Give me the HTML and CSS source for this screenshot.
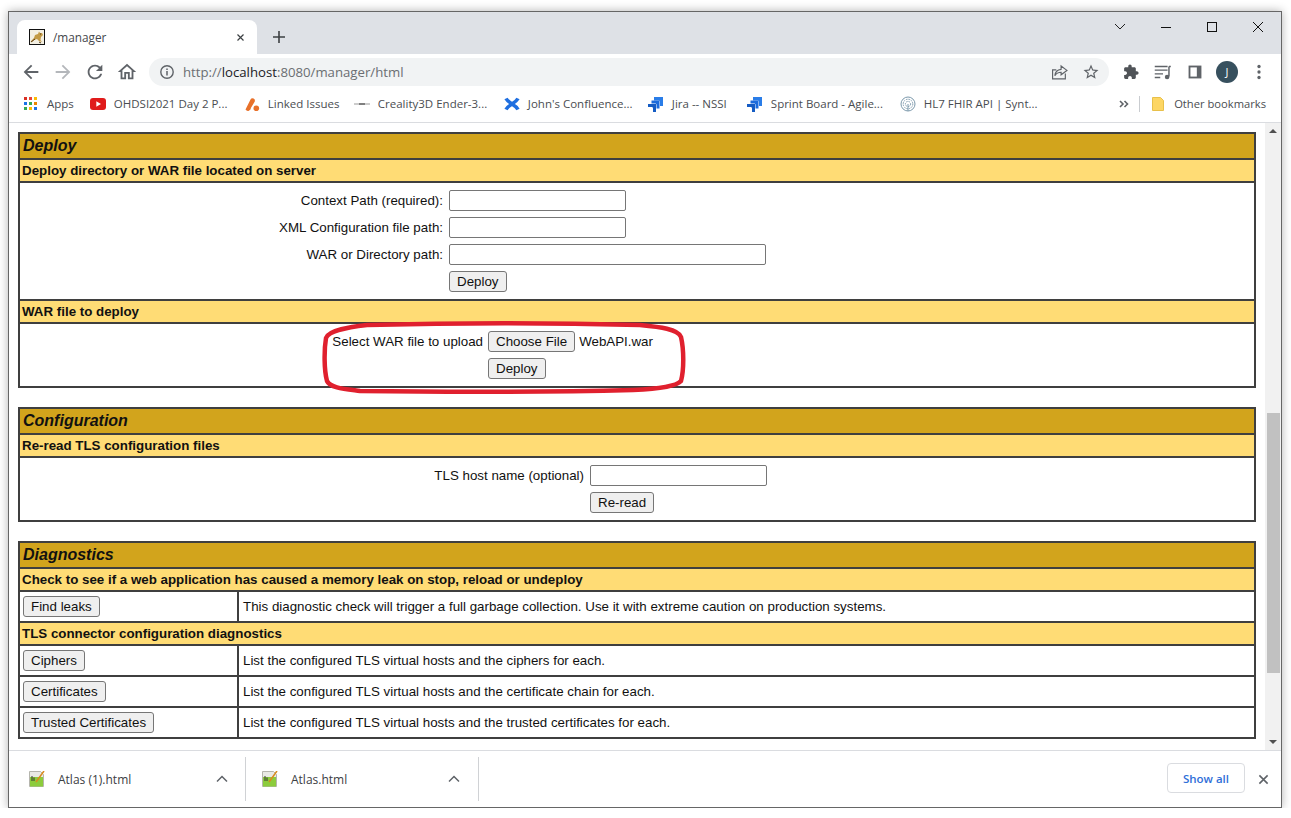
FILE: index.html
```html
<!DOCTYPE html>
<html lang="en">
<head>
    <meta charset="UTF-8">
    <title>/manager</title>
    <link rel="stylesheet" href="styles.css">
</head>
<body>
<div class="window">
    <div class="tabstrip">
        <div class="tab">
            <svg class="favicon" viewBox="0 0 16 16"><rect x=".5" y=".5" width="15" height="15" fill="#f3efe2" stroke="#111"/><path d="M1.500 12.500L5 9l1-3 3-1 1-2.500 1 1.500h2l1 2-2 2-.5 3 1.500 2-3-1-2-2-3 1-2 2z" fill="#c39a45"/><path d="M2 13l4-3M10 13l2 1M11 5h1" stroke="#5c4018"/></svg>
            <span class="tab-title">/manager</span>
            <svg class="tab-close" viewBox="0 0 12 12"><path d="M2 2l8 8M10 2l-8 8" stroke="#3c4043" stroke-width="1.6"/></svg>
        </div>
        <svg class="new-tab" viewBox="0 0 12 12"><path d="M6 0v12M0 6h12" stroke="#3c4043" stroke-width="1.6"/></svg>
        <div class="caption">
            <svg class="caption-btn" viewBox="0 0 46 30"><path d="M18 12l5 5 5-5" fill="none" stroke="#222"/></svg>
            <svg class="caption-btn" viewBox="0 0 46 30"><path d="M18 15.5h10" stroke="#111"/></svg>
            <svg class="caption-btn" viewBox="0 0 46 30"><rect x="18.5" y="10.5" width="9" height="9" fill="none" stroke="#111"/></svg>
            <svg class="caption-btn" viewBox="0 0 46 30"><path d="M18 10l10 10M28 10l-10 10" stroke="#111"/></svg>
        </div>
    </div>

    <div class="toolbar">
        <svg class="tool" viewBox="0 0 24 24"><path fill="#5f6368" d="M20 11H7.83l5.59-5.59L12 4l-8 8 8 8 1.41-1.41L7.83 13H20v-2z"/></svg>
        <svg class="tool" viewBox="0 0 24 24"><path fill="#b4b7bb" d="M4 11h12.17l-5.59-5.59L12 4l8 8-8 8-1.41-1.41L16.17 13H4v-2z"/></svg>
        <svg class="tool" viewBox="0 0 24 24"><path fill="#5f6368" d="M17.65 6.35C16.2 4.9 14.21 4 12 4c-4.42 0-7.99 3.58-7.99 8s3.57 8 7.99 8c3.73 0 6.84-2.55 7.73-6h-2.08c-.82 2.33-3.04 4-5.65 4-3.31 0-6-2.69-6-6s2.69-6 6-6c1.66 0 3.14.69 4.22 1.78L13 11h7V4l-2.35 2.35z"/></svg>
        <svg class="tool" viewBox="0 0 24 24"><path fill="#5f6368" d="M12 3L2 12h3v8h6v-6h2v6h6v-8h3L12 3zm5 15h-2v-6H9v6H7v-7.81l5-4.5 5 4.5V18z"/></svg>
        <div class="omnibox">
            <svg class="omni-info" viewBox="0 0 16 16"><circle cx="8" cy="8" r="6.2" fill="none" stroke="#5f6368" stroke-width="1.4"/><path d="M8 7v4.4M8 4.4v1.5" stroke="#5f6368" stroke-width="1.5"/></svg>
            <span class="url">http://<b>localhost</b>:8080/manager/html</span>
            <svg class="omni-icon" viewBox="0 0 16 16"><path d="M13.5 9v5H1.5V5.5H5" fill="none" stroke="#5f6368" stroke-width="1.1"/><path d="M9.5 1.8L15 6l-5.5 4.2V7.8C7 7.8 5 8.8 3.6 11c.3-3.4 2.4-5.6 5.9-6z" fill="none" stroke="#5f6368" stroke-width="1.1"/></svg>
            <svg class="omni-icon star" viewBox="0 0 24 24"><path fill="#5f6368" d="M22 9.24l-7.19-.62L12 2 9.19 8.63 2 9.24l5.46 4.73L5.82 21 12 17.27 18.18 21l-1.63-7.03L22 9.24zM12 15.4l-3.76 2.27 1-4.28-3.32-2.88 4.38-.38L12 6.1l1.71 4.04 4.38.38-3.32 2.88 1 4.28L12 15.4z"/></svg>
        </div>
        <div class="tool-right">
            <svg class="tool" viewBox="-4 -4 32 32"><path fill="#505458" d="M20.5 11H19V7c0-1.1-.9-2-2-2h-4V3.5C13 2.12 11.88 1 10.5 1S8 2.12 8 3.5V5H4c-1.1 0-1.99.9-1.99 2v3.8H3.5c1.49 0 2.7 1.21 2.7 2.7s-1.21 2.7-2.7 2.7H2V20c0 1.1.9 2 2 2h3.8v-1.5c0-1.49 1.21-2.7 2.7-2.7 1.49 0 2.7 1.21 2.7 2.7V22H17c1.1 0 2-.9 2-2v-4h1.5c1.38 0 2.5-1.12 2.5-2.5S21.88 11 20.5 11z"/></svg>
            <svg class="tool" viewBox="0 0 24 24"><path d="M3 6h14M3 10h14M3 14h9M3 18h6" stroke="#5f6368" stroke-width="1.4" fill="none"/><path d="M18.5 6h2M18.5 6v11" stroke="#5f6368" stroke-width="1.6"/><circle cx="16.5" cy="17.5" r="2.5" fill="#5f6368"/></svg>
            <svg class="tool" viewBox="0 0 24 24"><rect x="5" y="5" width="14" height="14" fill="#5f6368"/><rect x="7" y="7" width="7" height="10" fill="#fff"/></svg>
            <div class="avatar">J</div>
            <svg class="tool" viewBox="0 0 24 24"><circle cx="12" cy="6" r="1.8" fill="#5f6368"/><circle cx="12" cy="12" r="1.8" fill="#5f6368"/><circle cx="12" cy="18" r="1.8" fill="#5f6368"/></svg>
        </div>
    </div>

    <div class="bookmarks">
        <a class="bm bm-apps">
            <svg class="bm-icon" viewBox="0 0 14 14"><path d="M0 0h3v3H0z" fill="#d93025"/><path d="M5 0h3v3H5z" fill="#ea4335"/><path d="M10 0h3v3h-3z" fill="#fbbc04"/><path d="M0 5h3v3H0z" fill="#1a73e8"/><path d="M5 5h3v3H5z" fill="#34a853"/><path d="M10 5h3v3h-3z" fill="#ea8600"/><path d="M0 10h3v3H0z" fill="#34a853"/><path d="M5 10h3v3H5z" fill="#fbbc04"/><path d="M10 10h3v3h-3z" fill="#1a73e8"/></svg>
            <span class="bm-text">Apps</span>
        </a>
        <a class="bm bm-ohdsi">
            <svg class="bm-icon" viewBox="0 0 16 16"><rect y="2" width="16" height="12" rx="3" fill="#e01b1b"/><path d="M6.3 5.2L11 8l-4.7 2.8z" fill="#fff"/></svg>
            <span class="bm-text">OHDSI2021 Day 2 P...</span>
        </a>
        <a class="bm bm-linked">
            <svg class="bm-icon" viewBox="0 0 16 16"><path d="M1.500 13.500L6.500 3.500a2.400 2.400 0 0 1 4.300 2.100L7 11.800a3 3 0 0 1-5.500 1.700z" fill="#e8712a"/><circle cx="12.3" cy="12.3" r="2.8" fill="#e8712a"/></svg>
            <span class="bm-text">Linked Issues</span>
        </a>
        <a class="bm bm-creality">
            <svg class="bm-icon" viewBox="0 0 16 16"><path d="M0 8h5M11 8h5" stroke="#999"/><path d="M5 8h6" stroke="#555" stroke-width="1.5"/></svg>
            <span class="bm-text">Creality3D Ender-3...</span>
        </a>
        <a class="bm bm-confluence">
            <svg class="bm-icon" viewBox="0 0 16 16"><path d="M2 2.500C5 8 11 8 14 13.500M14 2.500C11 8 5 8 2 13.500" fill="none" stroke="#1f6fe0" stroke-width="3.600"/></svg>
            <span class="bm-text">John's Confluence...</span>
        </a>
        <a class="bm bm-jira">
            <svg class="bm-icon" viewBox="0 0 16 16"><path d="M6 1h9v9h-3V6c0-1-.5-1.500-1.500-1.500H6z" fill="#2a7de8"/><path d="M3.500 4.500h8v8h-3V9c0-1-.5-1.500-1.500-1.500H3.500z" fill="#1c6bdc"/><path d="M0 8h8v8H5v-3.500C5 11.500 4.500 11 3.500 11H0z" fill="#155cc4"/></svg>
            <span class="bm-text">Jira -- NSSI</span>
        </a>
        <a class="bm bm-sprint">
            <svg class="bm-icon" viewBox="0 0 16 16"><path d="M6 1h9v9h-3V6c0-1-.5-1.500-1.500-1.500H6z" fill="#2a7de8"/><path d="M3.500 4.500h8v8h-3V9c0-1-.5-1.500-1.500-1.500H3.500z" fill="#1c6bdc"/><path d="M0 8h8v8H5v-3.500C5 11.500 4.500 11 3.500 11H0z" fill="#155cc4"/></svg>
            <span class="bm-text">Sprint Board - Agile...</span>
        </a>
        <a class="bm">
            <svg class="bm-icon" viewBox="0 0 16 16" fill="none" stroke="#7b98ab"><circle cx="8" cy="8" r="7"/><circle cx="8" cy="8" r="4.8" stroke-dasharray="1.5 1"/><circle cx="8" cy="8" r="2.6" stroke-dasharray="1.5 1"/><path d="M8 8v7"/></svg>
            <span class="bm-text">HL7 FHIR API | Synt...</span>
        </a>
        <svg class="bm-more" viewBox="0 0 10 10"><path d="M1 2l3 3-3 3M5.500 2l3 3-3 3" fill="none" stroke="#5f6368" stroke-width="1.6"/></svg>
        <span class="bm-sep"></span>
        <a class="bm bm-other">
            <svg class="bm-folder" viewBox="0 0 12 14"><path d="M.5.500h8l3 3v10H.5z" fill="#fdd663" stroke="#e8c04a"/></svg>
            <span class="bm-text">Other bookmarks</span>
        </a>
    </div>

    <div class="viewport">
        <main class="page">
            <table class="box">
                <tr><td class="title" colspan="2">Deploy</td></tr>
                <tr><td class="header-left" colspan="2">Deploy directory or WAR file located on server</td></tr>
                <tr>
                    <td class="form-cell form-server" colspan="2">
                        <div class="form-grid grid-server">
                            <label>Context Path (required):</label><input class="field" type="text">
                            <label>XML Configuration file path:</label><input class="field" type="text">
                            <label>WAR or Directory path:</label><input class="field field-wide" type="text">
                            <span></span><div><button>Deploy</button></div>
                        </div>
                    </td>
                </tr>
                <tr><td class="header-left" colspan="2">WAR file to deploy</td></tr>
                <tr>
                    <td class="form-cell form-short" colspan="2">
                        <div class="form-grid grid-war">
                            <label>Select WAR file to upload</label>
                            <div class="file-line"><button>Choose File</button><span>WebAPI.war</span></div>
                            <span></span><div><button>Deploy</button></div>
                        </div>
                    </td>
                </tr>
            </table>

            <table class="box">
                <tr><td class="title" colspan="2">Configuration</td></tr>
                <tr><td class="header-left" colspan="2">Re-read TLS configuration files</td></tr>
                <tr>
                    <td class="form-cell form-short" colspan="2">
                        <div class="form-grid grid-tls">
                            <label>TLS host name (optional)</label><input class="field" type="text">
                            <span></span><div><button>Re-read</button></div>
                        </div>
                    </td>
                </tr>
            </table>

            <table class="box">
                <tr><td class="title" colspan="2">Diagnostics</td></tr>
                <tr><td class="header-left" colspan="2">Check to see if a web application has caused a memory leak on stop, reload or undeploy</td></tr>
                <tr>
                    <td class="action"><button>Find leaks</button></td>
                    <td class="desc">This diagnostic check will trigger a full garbage collection. Use it with extreme caution on production systems.</td>
                </tr>
                <tr><td class="header-left" colspan="2">TLS connector configuration diagnostics</td></tr>
                <tr>
                    <td class="action"><button>Ciphers</button></td>
                    <td class="desc">List the configured TLS virtual hosts and the ciphers for each.</td>
                </tr>
                <tr>
                    <td class="action"><button>Certificates</button></td>
                    <td class="desc">List the configured TLS virtual hosts and the certificate chain for each.</td>
                </tr>
                <tr>
                    <td class="action"><button>Trusted Certificates</button></td>
                    <td class="desc">List the configured TLS virtual hosts and the trusted certificates for each.</td>
                </tr>
            </table>

            <svg class="scribble" viewBox="320 320 368 76"><path d="M367 325C450 323 560 323 640 325C660 327 678 329 681 337C684 350 684 370 681 381C676 387 655 389 633 390C550 392 440 392 360 391C345 389 330 388 327 381C324 370 324 350 326 338C329 330 350 327 367 325Z" fill="none" stroke="#e0202e" stroke-width="4.5"/></svg>
        </main>
        <div class="scrollbar">
            <span class="arrow arrow-up"></span>
            <span class="thumb"></span>
            <span class="arrow arrow-down"></span>
        </div>
    </div>

    <div class="downloads">
        <div class="dl-item">
            <svg class="dl-icon" viewBox="0 0 16 16"><path d="M.5.500h11l3 3v12H.5z" fill="#e9e9e4" stroke="#b5b5ad"/><rect x="1" y="6" width="13" height="9.500" fill="#8ccc3c"/><path d="M3 10V5M5 10V6.500" stroke="#333"/><path d="M7 11L15 0" stroke="#d98a1e" stroke-width="1.500"/></svg>
            <span class="dl-name">Atlas (1).html</span>
            <svg class="dl-chev" viewBox="0 0 12 8"><path d="M1 6.500l5-5 5 5" fill="none" stroke="#5f6368" stroke-width="1.5"/></svg>
        </div>
        <div class="dl-item">
            <svg class="dl-icon" viewBox="0 0 16 16"><path d="M.5.500h11l3 3v12H.5z" fill="#e9e9e4" stroke="#b5b5ad"/><rect x="1" y="6" width="13" height="9.500" fill="#8ccc3c"/><path d="M3 10V5M5 10V6.500" stroke="#333"/><path d="M7 11L15 0" stroke="#d98a1e" stroke-width="1.500"/></svg>
            <span class="dl-name">Atlas.html</span>
            <svg class="dl-chev" viewBox="0 0 12 8"><path d="M1 6.500l5-5 5 5" fill="none" stroke="#5f6368" stroke-width="1.5"/></svg>
        </div>
        <button class="show-all">Show all</button>
        <svg class="dl-close" viewBox="0 0 12 12"><path d="M1.500 1.500l9 9M10.500 1.500l-9 9" stroke="#5f6368" stroke-width="1.7"/></svg>
    </div>
</div>
</body>
</html>
```

FILE: styles.css
```css
* {
    box-sizing: border-box;
}

body {
    margin: 0;
    background-color: #fff;
    font-family: "Open Sans", "Noto Sans", sans-serif;
    overflow: hidden;
}

.window {
    margin: 11px 0 0 8px;
    width: 1274px;
    height: 797px;
    border: 1px solid #666;
    box-shadow: 0 0 9px rgba(0, 0, 0, 0.3);
    background: #fff;
    display: flex;
    flex-direction: column;
}

/* tab strip */
.tabstrip {
    height: 42px;
    flex: none;
    background-color: #dee1e6;
    display: flex;
    align-items: flex-end;
    padding-left: 8px;
}

.tab {
    width: 240px;
    height: 34px;
    background: #fff;
    border-radius: 8px 8px 0 0;
    display: flex;
    align-items: center;
    padding: 0 11px 0 12px;
}

.favicon {
    width: 16px;
    height: 16px;
}

.tab-title {
    margin-left: 8px;
    font-size: 11.8px;
    color: #45484c;
    flex: 1;
}

.tab-close {
    width: 9px;
    height: 9px;
    margin-right: 1px;
}

.new-tab {
    width: 12px;
    height: 12px;
    margin: 0 0 11px 16px;
}

.caption {
    margin-left: auto;
    align-self: flex-start;
    display: flex;
}

.caption-btn {
    width: 46px;
    height: 30px;
}

/* toolbar */
.toolbar {
    height: 35px;
    flex: none;
    display: flex;
    align-items: center;
    padding-left: 11px;
    gap: 10px;
    background: #fff;
}

.tool {
    width: 22px;
    height: 22px;
    flex: none;
}

.omnibox {
    width: 960px;
    height: 28px;
    margin-left: 1px;
    margin-top: 1px;
    background-color: #f1f3f4;
    border-radius: 14px;
    display: flex;
    align-items: center;
    padding: 0 9px 0 10px;
    flex: none;
}

.omni-info {
    width: 16px;
    height: 16px;
}

.url {
    margin-left: 8px;
    font-size: 13.2px;
    color: #6b6e72;
    flex: 1;
}

.url b {
    font-weight: normal;
    color: #202124;
}

.omni-icon {
    width: 17px;
    height: 17px;
    margin-right: 14px;
}

.omni-icon.star {
    margin-right: 0;
    width: 18px;
    height: 18px;
}

.tool-right {
    display: flex;
    align-items: center;
    gap: 10px;
    margin-left: 1px;
}

.avatar {
    width: 22px;
    height: 22px;
    border-radius: 50%;
    background-color: #37505e;
    color: #fff;
    font-size: 11px;
    text-align: center;
    line-height: 22px;
}

/* bookmarks */
.bookmarks {
    height: 34px;
    flex: none;
    display: flex;
    align-items: center;
    padding: 0 0 4px 15px;
    gap: 16px;
    border-bottom: 1px solid #dadce0;
    background: #fff;
}

.bm {
    display: flex;
    align-items: center;
    gap: 8px;
    font-size: 11.5px;
    color: #4a4d51;
    white-space: nowrap;
}

.bm-icon {
    width: 16px;
    height: 16px;
    flex: none;
}

.bm-apps {
    gap: 9px;
}

.bm-apps .bm-icon {
    width: 14px;
    height: 14px;
}

.bm-ohdsi .bm-text {
    width: 114px;
}

.bm-linked .bm-text {
    width: 70px;
}

.bm-creality .bm-text {
    width: 110px;
}

.bm-confluence .bm-text {
    width: 104px;
}

.bm-jira .bm-text {
    width: 59px;
}

.bm-sprint .bm-text {
    width: 113px;
}

.bm-more {
    width: 10px;
    height: 10px;
    margin-left: auto;
}

.bm-sep {
    width: 1px;
    height: 16px;
    background: #c9ccd0;
    margin-left: -6px;
}

.bm-other {
    margin-right: 15px;
    margin-left: -4px;
    gap: 10px;
    font-size: 11.2px;
}

.bm-folder {
    width: 12px;
    height: 14px;
}

/* page area */
.viewport {
    flex: 1;
    min-height: 0;
    display: flex;
}

.page {
    position: relative;
    flex: 1;
    padding: 9px 9px 0;
    overflow: hidden;
    font-family: "Liberation Sans", Arial, sans-serif;
    font-size: 13.33px;
    color: #111;
}

.box {
    width: 100%;
    border-collapse: collapse;
    margin-bottom: 19px;
}

.box td {
    border: 2px solid #3f3f3f;
    padding: 0 3px;
}

.box .title {
    height: 26px;
    background-color: #d2a41c;
    font-size: 16px;
    font-weight: bold;
    font-style: italic;
}

.box .header-left {
    height: 23px;
    padding-left: 2px;
    background-color: #ffdc75;
    font-weight: bold;
}

.box .form-cell {
    vertical-align: top;
    padding: 0;
}

.form-server {
    height: 118px;
}

.form-short {
    height: 64px;
}

.form-grid {
    display: grid;
    column-gap: 6px;
    row-gap: 6px;
    padding-top: 7px;
    align-items: center;
}

.form-grid label {
    text-align: right;
}

.grid-server {
    grid-template-columns: 423px 1fr;
}

.grid-war {
    grid-template-columns: 463px 1fr;
    column-gap: 5px;
}

.grid-tls {
    grid-template-columns: 564px 1fr;
}

.field {
    width: 177px;
    height: 21px;
    border: 1px solid #767676;
    border-radius: 2px;
    background: #fff;
    padding: 0;
}

.field-wide {
    width: 317px;
}

button {
    height: 21px;
    padding: 0 7px;
    border: 1px solid #767676;
    border-radius: 3px;
    background-color: #efefef;
    font-family: "Liberation Sans", Arial, sans-serif;
    font-size: 13.33px;
    color: #111;
    display: block;
}

.file-line {
    display: flex;
    align-items: center;
    gap: 4px;
}

.box .action {
    height: 31px;
    width: 219px;
}

.box .desc {
    padding-left: 4px;
}

.scribble {
    position: absolute;
    left: 311px;
    top: 197px;
    width: 368px;
    height: 76px;
}

/* scrollbar */
.scrollbar {
    width: 16px;
    flex: none;
    background-color: #f1f1f1;
    display: flex;
    flex-direction: column;
    align-items: center;
}

.arrow {
    width: 0;
    height: 0;
    border-left: 4px solid transparent;
    border-right: 4px solid transparent;
}

.arrow-up {
    border-bottom: 4px solid #505050;
    margin-top: 6px;
}

.thumb {
    width: 13px;
    height: 260px;
    background-color: #c1c1c1;
    margin-top: 280px;
}

.arrow-down {
    border-top: 4px solid #505050;
    margin-top: auto;
    margin-bottom: 6px;
}

/* download shelf */
.downloads {
    height: 57px;
    flex: none;
    border-top: 1px solid #dadce0;
    display: flex;
    align-items: center;
    background: #fff;
}

.dl-item {
    width: 237px;
    height: 44px;
    display: flex;
    align-items: center;
    padding: 0 17px 0 20px;
    border-right: 1px solid #d0d2d5;
}

.dl-item + .dl-item {
    width: 233px;
    padding: 0 18px 0 16px;
}

.dl-icon {
    width: 16px;
    height: 16px;
}

.dl-name {
    margin-left: 13px;
    font-size: 12px;
    color: #3c4043;
    flex: 1;
}

.dl-chev {
    width: 12px;
    height: 8px;
}

.show-all {
    margin: -2px 0 0 auto;
    width: 78px;
    height: 30px;
    border: 1px solid #dadce0;
    border-radius: 4px;
    background: #fff;
    color: #2f6fd8;
    font-family: "Open Sans", sans-serif;
    font-size: 11.5px;
    font-weight: 600;
    padding: 0;
}

.dl-close {
    width: 11px;
    height: 11px;
    margin: 0 12px 0 13px;
}
```
